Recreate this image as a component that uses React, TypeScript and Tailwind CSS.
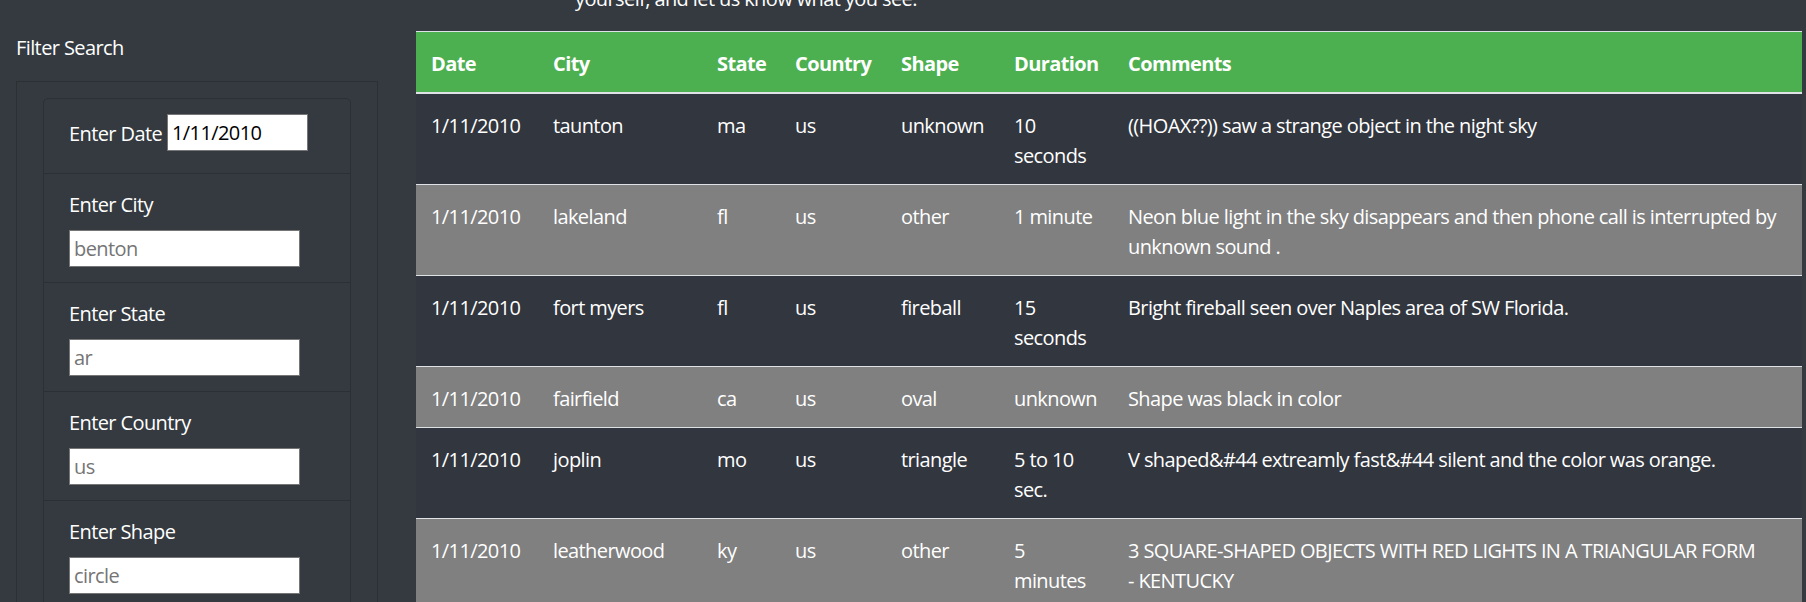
// UFO sightings filter page
import React from 'react';

interface Sighting {
  date: string;
  city: string;
  state: string;
  country: string;
  shape: string;
  duration: string[];
  comments: string[];
}

const sightings: Sighting[] = [
  {
    date: '1/11/2010',
    city: 'taunton',
    state: 'ma',
    country: 'us',
    shape: 'unknown',
    duration: ['10', 'seconds'],
    comments: ['((HOAX??)) saw a strange object in the night sky'],
  },
  {
    date: '1/11/2010',
    city: 'lakeland',
    state: 'fl',
    country: 'us',
    shape: 'other',
    duration: ['1 minute'],
    comments: ['Neon blue light in the sky disappears and then phone call is interrupted by', 'unknown sound .'],
  },
  {
    date: '1/11/2010',
    city: 'fort myers',
    state: 'fl',
    country: 'us',
    shape: 'fireball',
    duration: ['15', 'seconds'],
    comments: ['Bright fireball seen over Naples area of SW Florida.'],
  },
  {
    date: '1/11/2010',
    city: 'fairfield',
    state: 'ca',
    country: 'us',
    shape: 'oval',
    duration: ['unknown'],
    comments: ['Shape was black in color'],
  },
  {
    date: '1/11/2010',
    city: 'joplin',
    state: 'mo',
    country: 'us',
    shape: 'triangle',
    duration: ['5 to 10', 'sec.'],
    comments: ['V shaped&#44 extreamly fast&#44 silent and the color was orange.'],
  },
  {
    date: '1/11/2010',
    city: 'leatherwood',
    state: 'ky',
    country: 'us',
    shape: 'other',
    duration: ['5', 'minutes'],
    comments: ['3 SQUARE-SHAPED OBJECTS WITH RED LIGHTS IN A TRIANGULAR FORM', '- KENTUCKY'],
  },
];

const filters = [
  { label: 'Enter City', placeholder: 'benton' },
  { label: 'Enter State', placeholder: 'ar' },
  { label: 'Enter Country', placeholder: 'us' },
  { label: 'Enter Shape', placeholder: 'circle' },
];

function Lines({ lines }: { lines: string[] }) {
  return (
    <>
      {lines.map((line, i) => (
        <React.Fragment key={i}>
          {i > 0 && <br />}
          {line}
        </React.Fragment>
      ))}
    </>
  );
}

function FilterPanel() {
  return (
    <div className="w-[362px] shrink-0 pt-[33px]">
      <div className="mb-[18px]">Filter Search</div>

      <div className="border border-[#2b3035] px-[26px] pt-[16px]">
        <div className="rounded-t-[5px] border border-[#2b3035]">
          <div className="flex items-center px-[25px] pt-[15px] pb-[22px]">
            <label className="w-[93px] whitespace-nowrap pt-[2px]">Enter Date</label>
            <input
              type="text"
              defaultValue="1/11/2010"
              className="ml-[5px] h-[37px] w-[141px] border border-[#767676] bg-white px-[4px] text-black outline-none"
            />
          </div>

          {filters.map((f) => (
            <div key={f.label} className="border-t border-[#2b3035] px-[25px] pt-[16px] pb-[15px]">
              <label className="mb-[10px] block">{f.label}</label>
              <input
                type="text"
                placeholder={f.placeholder}
                className="block h-[37px] w-[231px] border border-[#767676] bg-white px-[4px] text-black outline-none placeholder:text-[#757575]"
              />
            </div>
          ))}
        </div>
      </div>
    </div>
  );
}

function SightingsTable() {
  const th = 'border-t border-b-2 border-[#dee2e6] px-[15px] pt-[17px] pb-[13px] text-left font-bold';
  const td = 'border-b border-[#dee2e6] px-[15px] pt-[17px] pb-[13px] align-top';

  return (
    <table className="w-[1386px] table-fixed border-separate border-spacing-0">
      <colgroup>
        <col className="w-[122px]" />
        <col className="w-[164px]" />
        <col className="w-[78px]" />
        <col className="w-[106px]" />
        <col className="w-[113px]" />
        <col className="w-[114px]" />
        <col className="w-[689px]" />
      </colgroup>
      <thead>
        <tr className="bg-[#4caf50] text-white">
          <th className={th}>Date</th>
          <th className={th}>City</th>
          <th className={th}>State</th>
          <th className={th}>Country</th>
          <th className={th}>Shape</th>
          <th className={th}>Duration</th>
          <th className={th}>Comments</th>
        </tr>
      </thead>
      <tbody>
        {sightings.map((s, i) => (
          <tr key={i} className={i % 2 === 1 ? 'bg-[#808080]' : 'bg-[#32363e]'}>
            <td className={td}>{s.date}</td>
            <td className={td}>{s.city}</td>
            <td className={td}>{s.state}</td>
            <td className={td}>{s.country}</td>
            <td className={td}>{s.shape}</td>
            <td className={`${td} whitespace-nowrap`}>
              <Lines lines={s.duration} />
            </td>
            <td className={`${td} whitespace-nowrap`}>
              <Lines lines={s.comments} />
            </td>
          </tr>
        ))}
      </tbody>
    </table>
  );
}

export default function App() {
  return (
    <div className="h-[602px] w-full overflow-hidden bg-[#343a40] font-['Open_Sans',sans-serif] text-[20px] leading-[30px] tracking-[-0.03em] text-white">
      <div className="flex pl-[16px]">
        <FilterPanel />

        <div className="ml-[38px] w-[1386px] shrink-0">
          <p className="-mt-[16px] mb-[17px] pl-[159px]">yourself, and let us know what you see.</p>
          <SightingsTable />
        </div>
      </div>
    </div>
  );
}
